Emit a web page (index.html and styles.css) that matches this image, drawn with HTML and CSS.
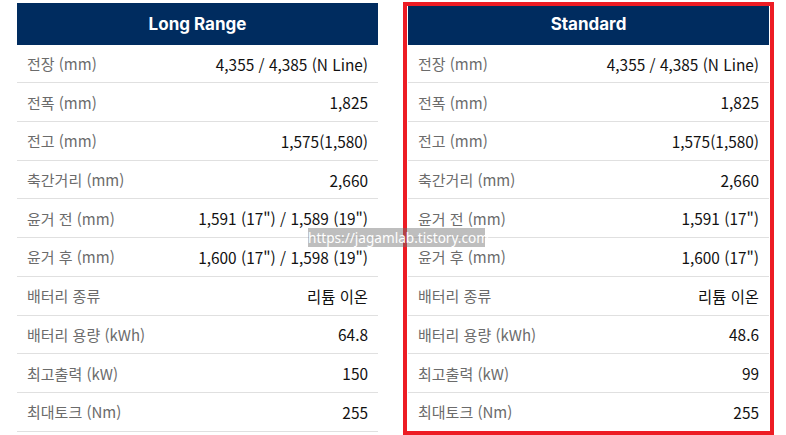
FILE: index.html
```html
<!DOCTYPE html>
<html lang="ko">
<head>
<meta charset="utf-8">
<link rel="stylesheet" href="styles.css">
</head>
<body>
<div class="page">
  <div class="spec">
    <div class="head">Long Range</div>
    <div class="row"><span class="lbl">전장 (mm)</span><span class="val">4,355 / 4,385 (N Line)</span></div>
    <div class="row"><span class="lbl">전폭 (mm)</span><span class="val">1,825</span></div>
    <div class="row"><span class="lbl">전고 (mm)</span><span class="val">1,575(1,580)</span></div>
    <div class="row"><span class="lbl">축간거리 (mm)</span><span class="val">2,660</span></div>
    <div class="row"><span class="lbl">윤거 전 (mm)</span><span class="val">1,591 (17") / 1,589 (19")</span></div>
    <div class="row"><span class="lbl">윤거 후 (mm)</span><span class="val">1,600 (17") / 1,598 (19")</span></div>
    <div class="row"><span class="lbl">배터리 종류</span><span class="val">리튬 이온</span></div>
    <div class="row"><span class="lbl">배터리 용량 (kWh)</span><span class="val">64.8</span></div>
    <div class="row"><span class="lbl">최고출력 (kW)</span><span class="val">150</span></div>
    <div class="row"><span class="lbl">최대토크 (Nm)</span><span class="val">255</span></div>
  </div>
  <div class="spec marked">
    <div class="head">Standard</div>
    <div class="row"><span class="lbl">전장 (mm)</span><span class="val">4,355 / 4,385 (N Line)</span></div>
    <div class="row"><span class="lbl">전폭 (mm)</span><span class="val">1,825</span></div>
    <div class="row"><span class="lbl">전고 (mm)</span><span class="val">1,575(1,580)</span></div>
    <div class="row"><span class="lbl">축간거리 (mm)</span><span class="val">2,660</span></div>
    <div class="row"><span class="lbl">윤거 전 (mm)</span><span class="val">1,591 (17")</span></div>
    <div class="row"><span class="lbl">윤거 후 (mm)</span><span class="val">1,600 (17")</span></div>
    <div class="row"><span class="lbl">배터리 종류</span><span class="val">리튬 이온</span></div>
    <div class="row"><span class="lbl">배터리 용량 (kWh)</span><span class="val">48.6</span></div>
    <div class="row"><span class="lbl">최고출력 (kW)</span><span class="val">99</span></div>
    <div class="row"><span class="lbl">최대토크 (Nm)</span><span class="val">255</span></div>
  </div>
  <div class="watermark">https://jagamlab.tistory.com</div>
</div>
</body>
</html>
```

FILE: styles.css
```css
html, body {
  margin: 0;
  padding: 0;
  background: #fff;
}
.page {
  position: relative;
  display: flex;
  align-items: flex-start;
  gap: 30px;
  padding: 3px 0 0 17px;
  width: 786px;
  height: 435px;
  box-sizing: border-box;
  overflow: hidden;
  font-family: "Noto Sans CJK KR", "Noto Sans", sans-serif;
}
.spec {
  position: relative;
  width: 361px;
  flex: none;
}
.head {
  height: 41.7px;
  background: #002c5f;
  color: #fff;
  font-family: "Inter", "Noto Sans", sans-serif;
  font-weight: 700;
  font-size: 17px;
  display: flex;
  align-items: center;
  justify-content: center;
}
.row {
  height: 37.7px;
  border-bottom: 1px solid #e0e0e0;
  display: flex;
  align-items: center;
  justify-content: space-between;
  padding: 0 10px;
  font-size: 15px;
}
.lbl {
  color: #6b6b6b;
}
.val {
  color: #111;
  font-size: 15.4px;
}
.marked::after {
  content: "";
  position: absolute;
  left: -5px;
  right: -5px;
  top: -1px;
  bottom: -3px;
  border: 4px solid #ed1c24;
  pointer-events: none;
}
.watermark {
  position: absolute;
  left: 308px;
  top: 228px;
  width: 177px;
  height: 19px;
  background: rgba(110, 110, 110, 0.45);
  color: #fff;
  font-family: "Noto Sans", sans-serif;
  font-size: 13.6px;
  line-height: 19px;
  text-align: center;
  white-space: nowrap;
}
```
